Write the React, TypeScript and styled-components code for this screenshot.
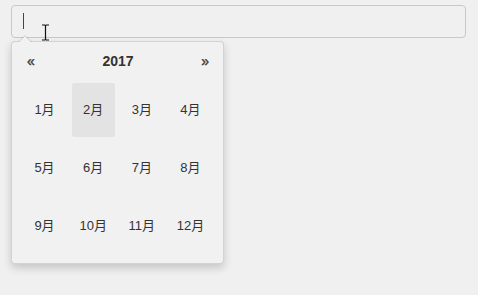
import React from "react"
import styled, { createGlobalStyle } from "styled-components"

const GlobalStyle = createGlobalStyle`
  html, body {
    margin: 0;
    padding: 0;
    background: #f0f0f0;
  }
  body {
    font-family: "Liberation Sans", Arial, "Noto Sans CJK SC", sans-serif;
    color: #333;
  }
`

const Page = styled.div`
  padding: 5px 12px 0 11px;
  height: 290px;
`

const Field = styled.div`
  position: relative;
  height: 33px;
  box-sizing: border-box;
  border: 1px solid #c8c8c8;
  border-radius: 4px;
  background: #f0f0f0;
`

const Caret = styled.span`
  position: absolute;
  left: 11px;
  top: 7px;
  width: 1px;
  height: 16px;
  background: #444;
`

const Pointer = styled.svg`
  position: absolute;
  left: 29px;
  top: 18px;
  z-index: 3;
`

const Popover = styled.div`
  position: relative;
  margin-top: 3px;
  width: 213px;
  box-sizing: border-box;
  padding: 2px 10px 10px 11px;
  background: #f1f1f1;
  border: 1px solid rgba(0, 0, 0, 0.12);
  border-radius: 4px;
  box-shadow: 0 4px 8px rgba(0, 0, 0, 0.18);

  &::before {
    content: "";
    position: absolute;
    top: -7px;
    left: 6px;
    border-left: 7px solid transparent;
    border-right: 7px solid transparent;
    border-bottom: 7px solid rgba(0, 0, 0, 0.15);
  }
  &::after {
    content: "";
    position: absolute;
    top: -6px;
    left: 7px;
    border-left: 6px solid transparent;
    border-right: 6px solid transparent;
    border-bottom: 6px solid #f1f1f1;
  }
`

const Header = styled.div`
  display: grid;
  grid-template-columns: 30px 1fr 30px;
  align-items: center;
  height: 34px;
  margin-bottom: 5px;
  font-weight: bold;
  color: #333;
`

const Nav = styled.span<{ $align: "left" | "right" }>`
  text-align: ${p => p.$align};
  padding: 0 4px;
  font-size: 14px;
  font-weight: normal;
  -webkit-text-stroke: 0.3px #333;
`

const Year = styled.span`
  text-align: center;
  font-size: 14px;
`

const Months = styled.div`
  display: grid;
  grid-template-columns: repeat(4, 43px);
  grid-auto-rows: 54px;
  column-gap: 5.67px;
  row-gap: 4px;
`

const Month = styled.span<{ $active?: boolean }>`
  display: flex;
  align-items: center;
  justify-content: center;
  padding-bottom: 3px;
  box-sizing: border-box;
  border-radius: 2px;
  font-size: 13px;
  color: #333;
  background: ${p => (p.$active ? "#e3e3e3" : "transparent")};
`

const months = Array.from({ length: 12 }, (_, i) => `${i + 1}月`)

export default function App() {
  return (
    <Page>
      <GlobalStyle />
      <Field>
        <Caret />
        <Pointer width="9" height="17" viewBox="0 0 9 17">
          <path d="M1 1 H3.5 Q4.5 1.5 5.5 1 H8 M4.5 1.5 V15.5 M1 16 H3.5 Q4.5 15.5 5.5 16 H8" fill="none" stroke="#111" strokeWidth="1.2" />
        </Pointer>
      </Field>
      <Popover>
        <Header>
          <Nav $align="left">«</Nav>
          <Year>2017</Year>
          <Nav $align="right">»</Nav>
        </Header>
        <Months>
          {months.map((m, i) => (
            <Month key={m} $active={i === 1}>{m}</Month>
          ))}
        </Months>
      </Popover>
    </Page>
  )
}
